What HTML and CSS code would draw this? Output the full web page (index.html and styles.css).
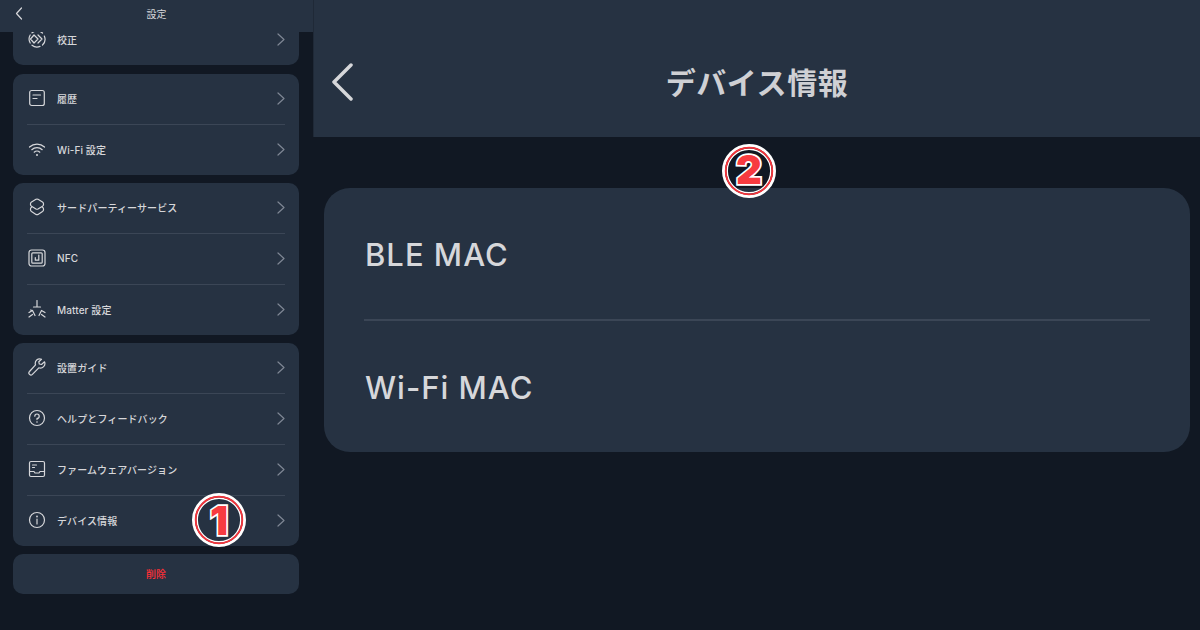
FILE: index.html
```html
<!DOCTYPE html>
<html lang="ja">
<head>
    <meta charset="UTF-8">
    <title>デバイス情報</title>
    <link rel="stylesheet" href="styles.css">
</head>
<body>
    <div class="sidebar">
        <div class="side-header">
            <svg class="side-back" viewBox="0 0 8 13"><path d="M6.5 1 1.5 6.5l5 5.5"/></svg>
            <span>設定</span>
        </div>
        <div class="side-list">
            <div class="card">
                <div class="row">
                    <svg class="icon" viewBox="0 0 18 18"><path d="M4 2.800A8 8 0 0 1 14.500 3M16.300 6A8 8 0 0 1 14.500 15M12 16.400A8 8 0 0 1 4 15.200M2.200 13A8 8 0 0 1 2.200 5"/><path d="M6 5 10 9 6 13 2.500 9zM10 5l4 4-4 4"/></svg>
                    <span class="label">校正</span>
                    <svg class="chevron" viewBox="0 0 8 13"><path d="M1 1l6 5.500L1 12"/></svg>
                </div>
            </div>
            <div class="card">
                <div class="row">
                    <svg class="icon" viewBox="0 0 18 18"><rect x="1.700" y="1.500" width="14.600" height="15" rx="2"/><path d="M5 6h7.500M5 9.500h4"/></svg>
                    <span class="label">履歴</span>
                    <svg class="chevron" viewBox="0 0 8 13"><path d="M1 1l6 5.500L1 12"/></svg>
                </div>
                <div class="row">
                    <svg class="icon" viewBox="0 0 18 18"><path d="M1.500 7A11 11 0 0 1 16.500 7M3.800 9.700A7.500 7.500 0 0 1 14.200 9.700M6.200 12.200A4 4 0 0 1 11.800 12.200"/><circle class="dot" cx="9" cy="15" r="1"/></svg>
                    <span class="label">Wi-Fi 設定</span>
                    <svg class="chevron" viewBox="0 0 8 13"><path d="M1 1l6 5.500L1 12"/></svg>
                </div>
            </div>
            <div class="card">
                <div class="row">
                    <svg class="icon" viewBox="0 0 18 18"><path d="M8 1.300Q9 .8 10 1.300L14.500 4Q15.500 4.700 15.500 5.800V6.500Q15.500 7.600 14.500 8.200L10 11Q9 11.500 8 11L3.500 8.200Q2.500 7.600 2.500 6.500V5.800Q2.500 4.700 3.500 4z"/><path d="M3.500 9.200Q2.500 9.900 2.500 11V11.800Q2.500 12.800 3.500 13.500L8 16.400Q9 16.900 10 16.400L14.500 13.500Q15.500 12.800 15.500 11.800V11Q15.500 9.900 14.500 9.200"/></svg>
                    <span class="label">サードパーティーサービス</span>
                    <svg class="chevron" viewBox="0 0 8 13"><path d="M1 1l6 5.500L1 12"/></svg>
                </div>
                <div class="row">
                    <svg class="icon" viewBox="0 0 18 18"><rect x="1" y="1" width="16" height="16" rx="2.500"/><rect x="3.800" y="3.800" width="10.400" height="10.400" rx="1"/><path d="M10.800 6v5.200H7.300V8.500"/></svg>
                    <span class="label">NFC</span>
                    <svg class="chevron" viewBox="0 0 8 13"><path d="M1 1l6 5.500L1 12"/></svg>
                </div>
                <div class="row">
                    <svg class="icon" viewBox="0 0 18 18"><path d="M9 .5v6M5.500 7h7M1 12.500 4.500 10.500 7 15.500M2.500 10l2 .5M1 17l3.500-2.500M17 12.500l-3.500-2L11 15.500M17 17l-3.500-2.500"/></svg>
                    <span class="label">Matter 設定</span>
                    <svg class="chevron" viewBox="0 0 8 13"><path d="M1 1l6 5.500L1 12"/></svg>
                </div>
            </div>
            <div class="card">
                <div class="row">
                    <svg class="icon" viewBox="0 0 18 18"><path d="M16.500 3.800 13.500 6.500 11.300 6 10.800 3.800 13.500 1.200A4.500 4.500 0 0 0 7.500 6.800L1.500 13.500A1.900 1.900 0 0 0 4.400 16.300L10.800 9.800A4.500 4.500 0 0 0 16.500 3.800z"/></svg>
                    <span class="label">設置ガイド</span>
                    <svg class="chevron" viewBox="0 0 8 13"><path d="M1 1l6 5.500L1 12"/></svg>
                </div>
                <div class="row">
                    <svg class="icon" viewBox="0 0 18 18"><circle cx="9" cy="9" r="7.500"/><path d="M6.800 7.200A2.200 2.200 0 1 1 9 9.400v1.200"/><circle class="dot" cx="9" cy="13" r=".8"/></svg>
                    <span class="label">ヘルプとフィードバック</span>
                    <svg class="chevron" viewBox="0 0 8 13"><path d="M1 1l6 5.500L1 12"/></svg>
                </div>
                <div class="row">
                    <svg class="icon" viewBox="0 0 18 18"><rect x="1.500" y="1.500" width="15" height="15" rx="1.500"/><path d="M1.500 11.500h4.500l1 1.500h4l1-1.500h4.500M4.500 5h4M4.500 7.500h2"/></svg>
                    <span class="label">ファームウェアバージョン</span>
                    <svg class="chevron" viewBox="0 0 8 13"><path d="M1 1l6 5.500L1 12"/></svg>
                </div>
                <div class="row">
                    <svg class="icon" viewBox="0 0 18 18"><circle cx="9" cy="9" r="7.500"/><path d="M9 8v5"/><circle class="dot" cx="9" cy="5.500" r=".9"/></svg>
                    <span class="label">デバイス情報</span>
                    <svg class="chevron" viewBox="0 0 8 13"><path d="M1 1l6 5.500L1 12"/></svg>
                    <svg class="badge badge-one" viewBox="0 0 56 56">
                        <circle class="ring-white" cx="28" cy="28" r="25.500"/>
                        <circle class="ring-inner" cx="28" cy="28" r="21.800"/>
                        <circle class="ring-red" cx="28" cy="28" r="23.300"/>
                        <text class="badge-num" x="28" y="43">1</text>
                    </svg>
                </div>
            </div>
            <div class="card delete">削除</div>
        </div>
    </div>

    <div class="main">
        <div class="main-header">
            <svg class="main-back" viewBox="0 0 24 38"><path d="M20 2 3 19l17 17"/></svg>
            <h1>デバイス情報</h1>
        </div>
        <svg class="badge badge-two" viewBox="0 0 56 56">
            <circle class="ring-white" cx="28" cy="28" r="25.500"/>
            <circle class="ring-inner" cx="28" cy="28" r="21.800"/>
            <circle class="ring-red" cx="28" cy="28" r="23.300"/>
            <text class="badge-num" x="28" y="41">2</text>
        </svg>
        <div class="info-card">
            <div class="info-row">BLE MAC</div>
            <div class="info-row">Wi-Fi MAC</div>
        </div>
    </div>
</body>
</html>
```

FILE: styles.css
```css
* {
    box-sizing: border-box;
}
body {
    margin: 0;
    width: 1200px;
    height: 630px;
    overflow: hidden;
    display: flex;
    background-color: #111823;
    color: #d6d7da;
    font-family: Inter, "Noto Sans CJK JP", sans-serif;
}
.sidebar {
    width: 313px;
    flex: none;
}
.side-header {
    position: relative;
    z-index: 1;
    height: 32px;
    padding-bottom: 5px;
    display: flex;
    align-items: center;
    justify-content: center;
    background-color: #263242;
    font-size: 10px;
}
.side-back {
    position: absolute;
    left: 15px;
    top: 7px;
    width: 8px;
    height: 13px;
    fill: none;
    stroke: #d6d7da;
    stroke-width: 1.2;
    stroke-linecap: round;
    stroke-linejoin: round;
}
.side-list {
    margin-top: -17px;
    padding: 0 14px 0 13px;
    display: flex;
    flex-direction: column;
    gap: 8px;
}
.card {
    background-color: #263242;
    border-radius: 10px;
    padding: 0 14px;
}
.card:nth-child(2) {
    margin-top: 1px;
}
.row {
    position: relative;
    height: 51px;
    padding-bottom: 2px;
    display: flex;
    align-items: center;
    border-top: 1px solid #3b4656;
}
.row:first-child {
    height: 50px;
    border-top: none;
}
.icon {
    width: 18px;
    height: 18px;
    margin-left: 1px;
    margin-right: 11px;
    flex: none;
    fill: none;
    stroke: #d6d7da;
    stroke-width: 1.2;
    stroke-linecap: round;
    stroke-linejoin: round;
}
.icon .dot {
    fill: #d6d7da;
    stroke: none;
}
.label {
    flex: 1;
    font-size: 10px;
    font-weight: 500;
    letter-spacing: 0.1px;
}
.chevron {
    width: 8px;
    height: 13px;
    fill: none;
    stroke: #7f8794;
    stroke-width: 1.2;
    stroke-linecap: round;
    stroke-linejoin: round;
}
.delete {
    height: 40px;
    padding-bottom: 2px;
    display: flex;
    align-items: center;
    justify-content: center;
    color: #ff2f36;
    font-size: 10px;
    font-weight: 500;
}
.main {
    position: relative;
    flex: 1;
}
.main-header {
    position: relative;
    height: 137px;
    padding-top: 24px;
    display: flex;
    align-items: center;
    justify-content: center;
    background-color: #263242;
    border-left: 1px solid #1f2937;
}
.main-header h1 {
    margin: 0;
    font-size: 30px;
    font-weight: 700;
    letter-spacing: 0.6px;
    color: #cfd0d4;
}
.main-back {
    position: absolute;
    left: 17px;
    top: 63px;
    width: 24px;
    height: 38px;
    fill: none;
    stroke: #d6d7da;
    stroke-width: 3.5;
    stroke-linecap: round;
    stroke-linejoin: round;
}
.info-card {
    margin: 51px 10px 0 11px;
    height: 264px;
    padding: 0 40px;
    background-color: #263242;
    border-radius: 26px;
}
.info-row {
    height: 131px;
    padding: 1px 1px 0;
    display: flex;
    align-items: center;
    font-size: 31px;
    font-weight: 500;
    letter-spacing: 1px;
}
.info-row + .info-row {
    height: 133px;
    border-top: 2px solid #3b4656;
}
.badge {
    position: absolute;
    width: 56px;
    height: 56px;
}
.badge-one {
    left: 164px;
    top: -4px;
}
.badge-two {
    left: 408px;
    top: 143px;
}
.ring-white {
    fill: none;
    stroke: #fff;
    stroke-width: 3;
}
.ring-inner {
    fill: none;
    stroke: #fff;
    stroke-width: 1.500;
}
.ring-red {
    fill: none;
    stroke: #f5333a;
    stroke-width: 1.800;
}
.badge-num {
    fill: #f73b40;
    stroke: #fff;
    stroke-width: 3.500;
    paint-order: stroke;
    font-family: Inter, sans-serif;
    font-size: 40px;
    font-weight: 900;
    text-anchor: middle;
}
```
